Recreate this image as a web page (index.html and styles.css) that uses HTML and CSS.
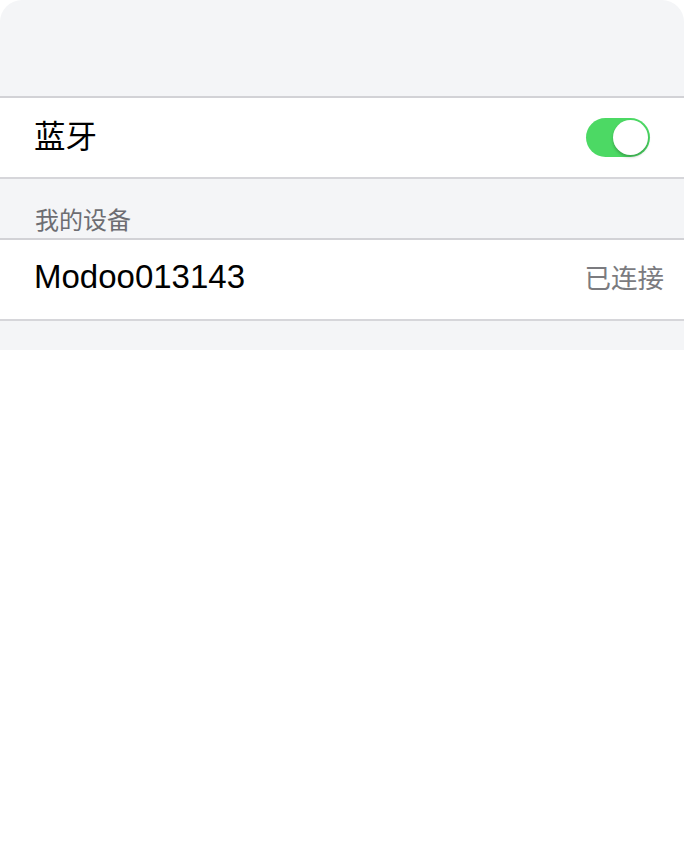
FILE: index.html
```html
<!DOCTYPE html>
<html lang="zh">
<head>
<meta charset="utf-8">
<link rel="stylesheet" href="styles.css">
</head>
<body>
<div class="sheet">
  <div class="top-space"></div>
  <div class="group">
    <div class="row">
      <span class="label label-cjk">蓝牙</span>
      <span class="switch on"><span class="knob"></span></span>
    </div>
  </div>
  <div class="section-header">我的设备</div>
  <div class="group">
    <div class="row">
      <span class="label">Modoo013143</span>
      <span class="status">已连接</span>
    </div>
  </div>
  <div class="bottom-space"></div>
</div>
</body>
</html>
```
FILE: styles.css
```css
html, body {
  margin: 0;
  padding: 0;
  background: #ffffff;
}
body {
  font-family: "Liberation Sans", "Noto Sans CJK SC", sans-serif;
  width: 684px;
  height: 863px;
}
.sheet {
  background: #f4f5f7;
  border-radius: 22px 22px 0 0;
}
.top-space {
  height: 96px;
}
.group {
  background: #ffffff;
  border-top: 2px solid #d2d2d6;
  border-bottom: 2px solid #d6d6da;
}
.row {
  height: 79px;
  display: flex;
  align-items: center;
  justify-content: space-between;
  padding: 0 33px 0 34px;
}
.label {
  font-size: 33px;
  line-height: 40px;
  color: #000;
  margin-bottom: 5px;
}
.label-cjk {
  font-size: 31.5px;
  margin-bottom: 1px;
}
.section-header {
  height: 59px;
  box-sizing: border-box;
  padding: 27px 0 0 35px;
  font-size: 24px;
  line-height: 30px;
  color: #6d6d72;
}
.status {
  font-size: 26.5px;
  line-height: 40px;
  color: #7b7b7f;
  margin-right: -13px;
  margin-bottom: 2px;
}
.switch {
  position: relative;
  width: 64px;
  height: 39px;
  border-radius: 20px;
  background: #4cd964;
  margin-right: 1px;
}
.knob {
  position: absolute;
  top: 2px;
  right: 2px;
  width: 35px;
  height: 35px;
  border-radius: 50%;
  background: #fff;
  box-shadow: 0 2px 3px rgba(0,0,0,0.25);
}
.bottom-space {
  height: 29px;
}
```
